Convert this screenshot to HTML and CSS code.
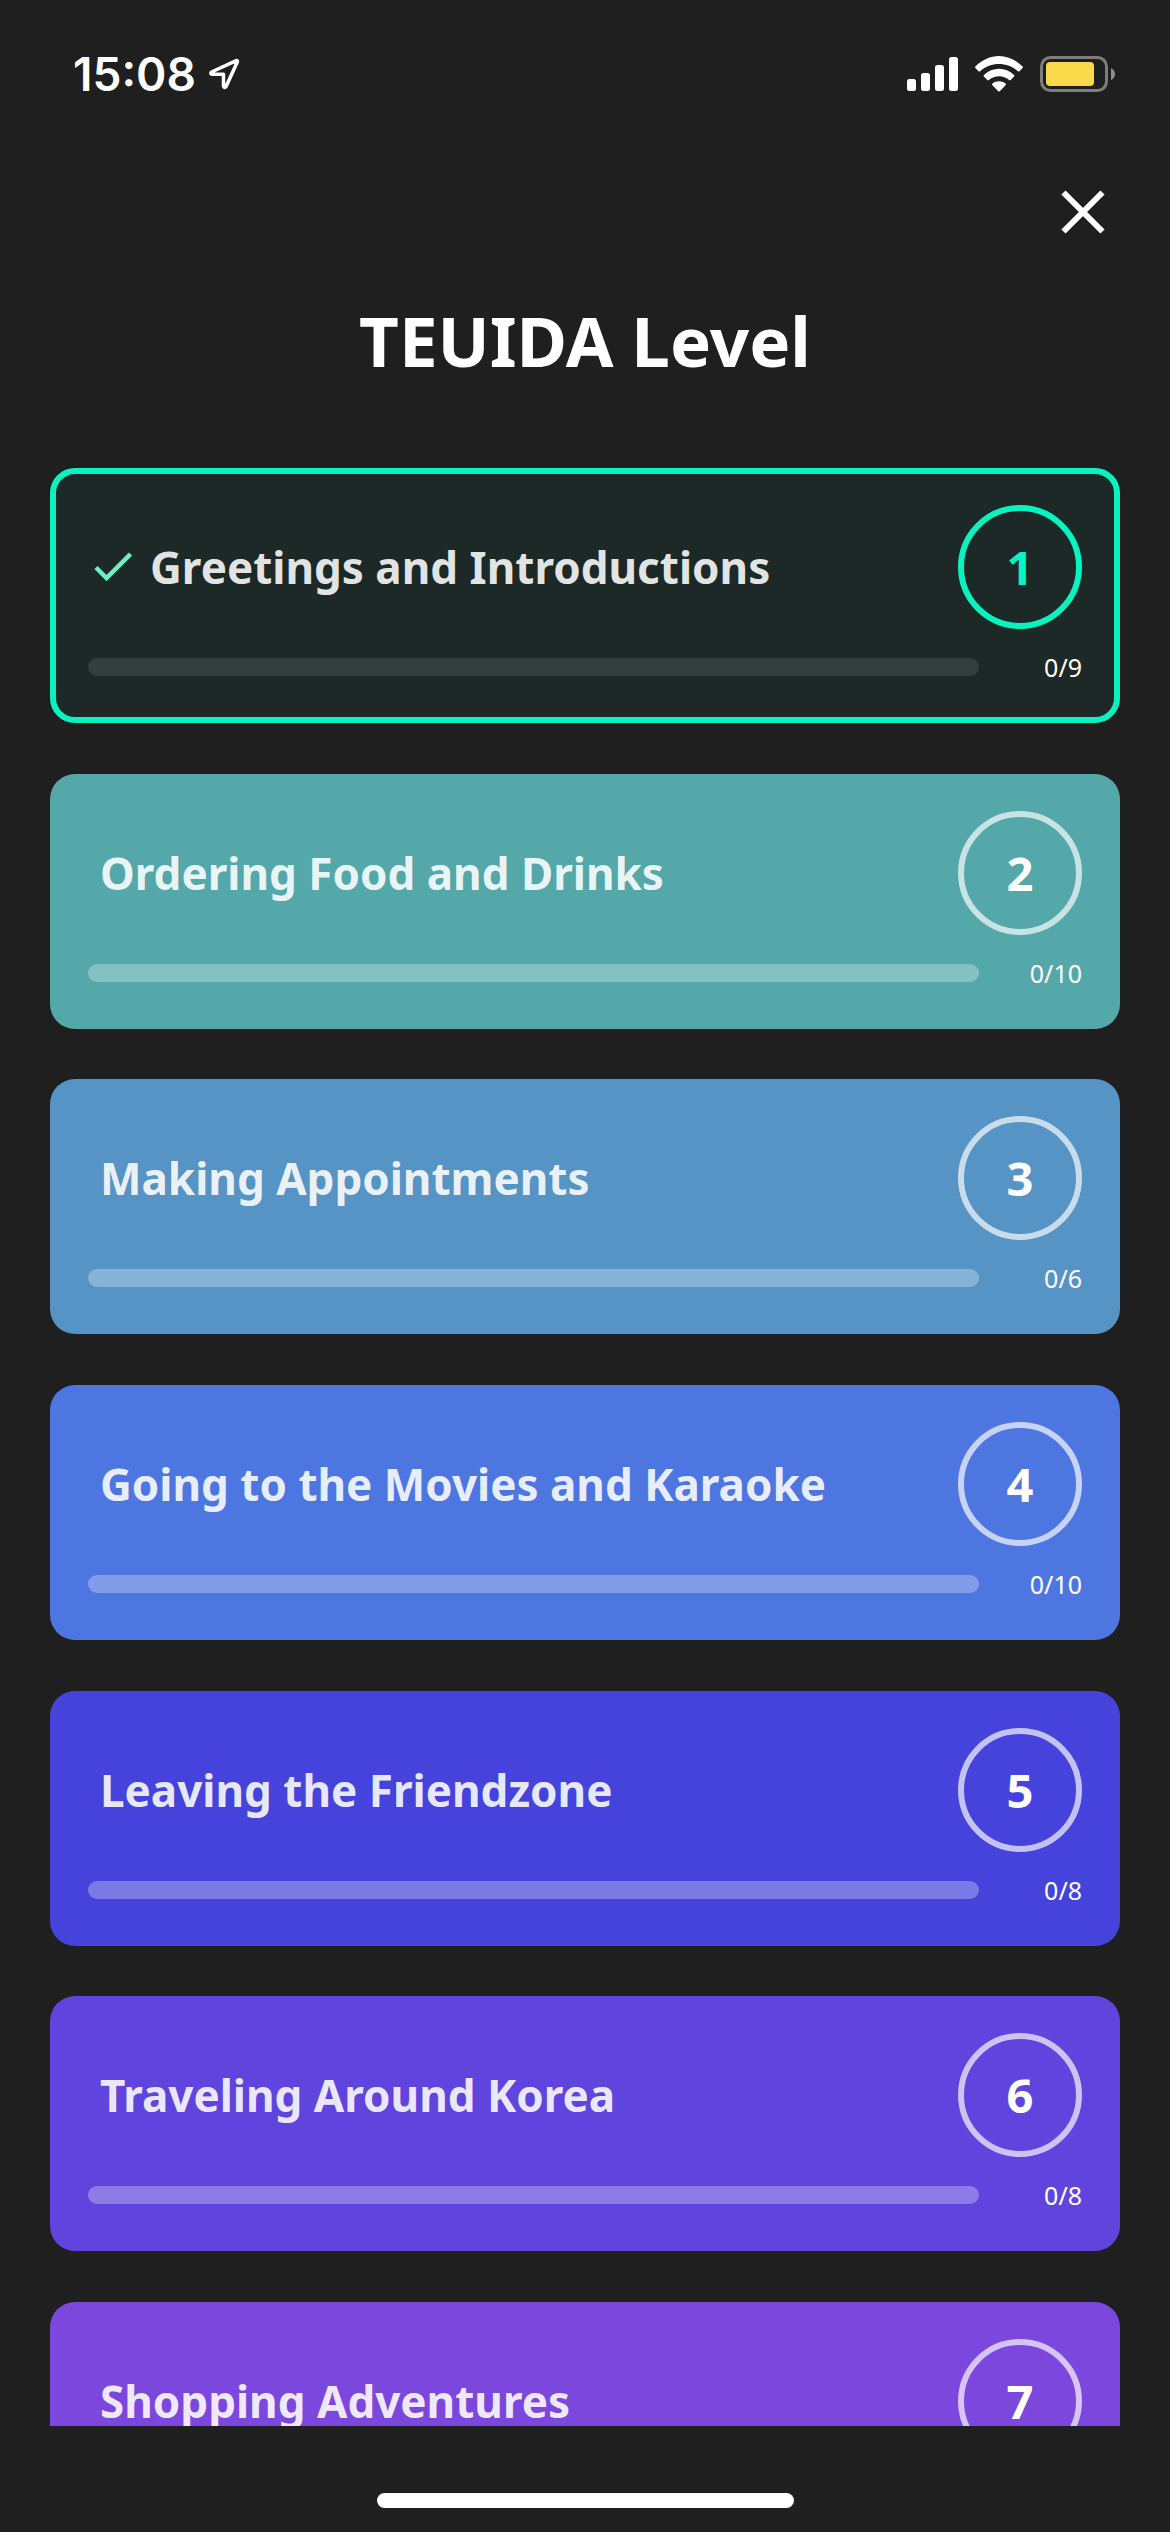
FILE: index.html
```html
<!DOCTYPE html>
<html lang="en">
<head>
<meta charset="utf-8">
<meta name="viewport" content="width=device-width, initial-scale=1">
<title>TEUIDA Level</title>
<link rel="stylesheet" href="styles.css">
</head>
<body>
<div class="status">
  <div class="status-group">
    <span class="time">15:08</span>
    <svg class="location" width="32" height="32" viewBox="0 0 32 32" aria-hidden="true"><path d="M28.300 2.700 3.500 14Q2 15.500 3.700 16.200H15.500V28.300Q16.500 30.500 18 28.700L29.300 4Q29.800 2.200 28.300 2.700Z" fill="none" stroke="#fff" stroke-width="3.500" stroke-linejoin="round"/></svg>
  </div>
  <div class="status-group icons">
    <svg width="51" height="36" viewBox="0 0 51 36" aria-hidden="true" fill="#fff"><rect y="23" width="9" height="12" rx="2.500"/><rect x="14" y="17" width="9" height="18" rx="2.500"/><rect x="28" y="9" width="9" height="26" rx="2.500"/><rect x="42" y="1" width="9" height="34" rx="2.500"/></svg>
    <svg width="48" height="36" viewBox="0 0 48 36" aria-hidden="true" fill="#fff"><path d="M.4 10.600C14 -3.500 34 -3.500 47.600 10.600Q48.400 11.300 47.600 12L44.500 15.200Q43.700 16 42.900 15.200C32 5.500 16 5.500 5.100 15.200Q4.300 16 3.500 15.200L.4 12Q-.4 11.300 .4 10.600Z"/><path d="M8.900 19C17.500 10.700 30.500 10.700 39.100 19Q39.900 19.800 39.100 20.500L35.700 24Q34.900 24.800 34.100 24C28 19 20 19 13.900 24Q13.100 24.800 12.300 24L8.900 20.500Q8.100 19.800 8.900 19Z"/><path d="M17.400 27.600C21.300 24.500 26.700 24.500 30.600 27.600Q31.400 28.400 30.600 29.200L24.700 35.200Q24 35.800 23.300 35.200L17.400 29.200Q16.600 28.400 17.400 27.600Z"/></svg>
    <svg width="76" height="36" viewBox="0 0 76 36" aria-hidden="true"><rect x="1.500" y="1.500" width="65" height="33" rx="9" fill="none" stroke="#7e7e7e" stroke-width="3"/><rect x="6" y="6" width="48" height="24" rx="4" fill="#f9d84a"/><path d="M71 12Q75 14 75 18T71 24Z" fill="#8f8f8f"/></svg>
  </div>
</div>
<header class="header">
  <button class="close" type="button" aria-label="Close"><svg width="44" height="44" viewBox="0 0 44 44" aria-hidden="true"><path d="M2.500 2.500 41.500 41.500M41.500 2.500 2.500 41.500" stroke="#fff" stroke-width="6"/></svg></button>
  <h1 class="title">TEUIDA Level</h1>
</header>
<main class="scroller">
  <ul class="levels">
    <li><button class="card selected" type="button"><span class="name"><svg class="check" width="38" height="30" viewBox="0 0 38 30" aria-hidden="true"><path d="M2 15.500 12.500 26 36.500 2" fill="none" stroke="#6cf0c4" stroke-width="4.500"/></svg>Greetings and Introductions</span><span class="number">1</span><progress class="bar" value="0" max="9" aria-label="Lessons done"></progress><span class="count">0/9</span></button></li>
    <li><button class="card teal" type="button"><span class="name">Ordering Food and Drinks</span><span class="number">2</span><progress class="bar" value="0" max="10" aria-label="Lessons done"></progress><span class="count">0/10</span></button></li>
    <li><button class="card sky" type="button"><span class="name">Making Appointments</span><span class="number">3</span><progress class="bar" value="0" max="6" aria-label="Lessons done"></progress><span class="count">0/6</span></button></li>
    <li><button class="card blue" type="button"><span class="name">Going to the Movies and Karaoke</span><span class="number">4</span><progress class="bar" value="0" max="10" aria-label="Lessons done"></progress><span class="count">0/10</span></button></li>
    <li><button class="card indigo" type="button"><span class="name">Leaving the Friendzone</span><span class="number">5</span><progress class="bar" value="0" max="8" aria-label="Lessons done"></progress><span class="count">0/8</span></button></li>
    <li><button class="card violet" type="button"><span class="name">Traveling Around Korea</span><span class="number">6</span><progress class="bar" value="0" max="8" aria-label="Lessons done"></progress><span class="count">0/8</span></button></li>
    <li><button class="card purple" type="button"><span class="name">Shopping Adventures</span><span class="number">7</span></button></li>
  </ul>
</main>
<footer class="home"><div class="home-bar"></div></footer>
</body>
</html>
```

FILE: styles.css
```css
* {
  box-sizing: border-box;
}

body {
  margin: 0;
  height: 100vh;
  display: flex;
  flex-direction: column;
  background: #1f1f1f;
  color: #fff;
  font-family: "Noto Sans", sans-serif;
}

.status {
  height: 148px;
  padding: 0 54px 0 73px;
  display: flex;
  align-items: center;
  justify-content: space-between;
}

.status-group {
  display: flex;
  align-items: center;
  gap: 12px;
}

.icons {
  gap: 17px;
}

.time {
  font: 600 46px/56px Inter, sans-serif;
}

.header {
  display: flex;
  flex-direction: column;
}

.close {
  align-self: flex-end;
  height: 128px;
  padding: 0 24px;
  margin-right: 41px;
  display: flex;
  align-items: center;
  border: 0;
  background: none;
}

.title {
  margin: 0;
  font-size: 69px;
  font-weight: 700;
  line-height: 128px;
  text-align: center;
}

.scroller {
  flex: 1;
  min-height: 0;
  margin-top: 64px;
  overflow-y: auto;
  scrollbar-width: none;
}

.levels {
  margin: 0;
  padding: 0 50px;
  list-style: none;
  display: flex;
  flex-direction: column;
  gap: 2vh;
}

.levels li {
  display: flex;
}

.card {
  --ring: rgba(255, 255, 255, 0.68);
  --track: rgba(255, 255, 255, 0.29);
  flex: 1;
  min-height: 255px;
  padding: 31px 32px;
  display: grid;
  grid-template-columns: 1fr 103px;
  grid-template-rows: 124px 28px;
  align-content: start;
  align-items: center;
  row-gap: 24px;
  border: 6px solid transparent;
  border-radius: 25px;
  color: #fff;
  font-family: inherit;
  text-align: left;
}

.name {
  padding-left: 12px;
  display: flex;
  align-items: center;
  gap: 18px;
  font-size: 44px;
  font-weight: 700;
  line-height: 60px;
  color: rgba(255, 255, 255, 0.89);
}

.number {
  justify-self: end;
  width: 124px;
  height: 124px;
  display: grid;
  place-items: center;
  border: 6px solid var(--ring);
  border-radius: 50%;
  font-size: 47px;
  font-weight: 700;
}

.bar {
  appearance: none;
  width: 100%;
  height: 18px;
  border: 0;
  border-radius: 9px;
  overflow: hidden;
  background: var(--track);
}

.bar::-webkit-progress-bar {
  background: transparent;
}

.bar::-webkit-progress-value {
  background: #fff;
}

.count {
  font-size: 25px;
  line-height: 28px;
  text-align: right;
}

.selected {
  --ring: #09f3c1;
  --track: rgba(255, 255, 255, 0.1);
  border-color: #09f3c1;
  background: #1d2927;
}

.selected .name {
  padding-left: 6px;
}

.selected .number {
  color: #09f3c1;
}

.teal { background-color: #55a8aa; }
.sky { background-color: #5594c4; }
.blue { background-color: #4e76e0; }
.indigo { background-color: #4543dc; }
.violet { background-color: #5f45dd; }
.purple { background-color: #7c47dd; }

.home {
  height: 106px;
  padding-top: 67px;
}

.home-bar {
  width: 36%;
  max-width: 417px;
  height: 15px;
  margin: 0 auto;
  border-radius: 8px;
  background: #fff;
}
```
